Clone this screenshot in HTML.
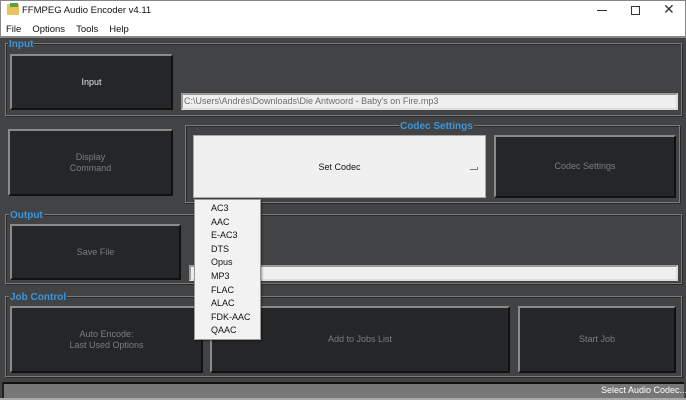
<!DOCTYPE html>
<html><head><meta charset="utf-8"><style>
*{margin:0;padding:0;box-sizing:border-box}
html,body{width:686px;height:400px;overflow:hidden}
body{background:#424345;font-family:"Liberation Sans",sans-serif;font-size:9px;position:relative;white-space:nowrap}
.a{position:absolute}
.title{left:0;top:0;width:686px;height:37px;background:#fff;border:1px solid #888;border-bottom:none}
.grp{border:1px solid #7a7a7a;box-shadow:inset 1px 1px 0 #2a2a2a, 1px 1px 0 #2a2a2a}
.lbl{color:#3a96dd;font-weight:bold;font-size:10px;background:#424345;padding:0 1px;line-height:11px}
.btn{background:#242628;border:2px solid #8a8a8a;border-right-color:#111;border-bottom-color:#111;color:#7d7d7d;display:flex;align-items:center;justify-content:center;text-align:center;line-height:11px}
.tb{background:#efefef;border:2px solid #9a9a9a;border-right-color:#ddd;border-bottom-color:#ddd;color:#6d6d6d;line-height:12px;padding-left:1px}
.menu span{margin-right:11px}
.dd{background:#f2f2f2;border:1px solid #999;box-shadow:1px 1px 2px rgba(0,0,0,.4)}
.dd div{height:13.6px;line-height:13.6px;padding-left:16px;color:#111}
</style></head><body>
<div class="a title"></div>
<div class="a" style="left:7px;top:4px;width:12px;height:11px;background:#e8c25a;border-radius:1px"></div>
<div class="a" style="left:10px;top:3px;width:8px;height:4px;background:#5aa04a"></div>
<div class="a" style="left:22px;top:5px;font-size:9.5px;color:#111">FFMPEG Audio Encoder v4.11</div>
<div class="a" style="left:597px;top:10px;width:10px;height:1px;background:#333"></div>
<div class="a" style="left:631px;top:6px;width:9px;height:9px;border:1px solid #333"></div>
<div class="a" style="left:663px;top:1px;font-size:14px;color:#333">✕</div>
<div class="a menu" style="left:6px;top:24px;font-size:9.5px;color:#111"><span>File</span><span>Options</span><span>Tools</span><span>Help</span></div>
<div class="a" style="left:0;top:36px;width:686px;height:2px;background:#8a8a8a"></div>

<div class="a grp" style="left:5px;top:43px;width:677px;height:73px"></div>
<div class="a lbl" style="left:8px;top:39px">Input</div>
<div class="a btn" style="left:10px;top:54px;width:163px;height:56px;color:#e8e8e8">Input</div>
<div class="a tb" style="left:181px;top:93px;width:497px;height:17px">C:\Users\Andrés\Downloads\Die Antwoord - Baby's on Fire.mp3</div>

<div class="a btn" style="left:8px;top:129px;width:165px;height:67px">Display<br>Command</div>
<div class="a grp" style="left:185px;top:125px;width:495px;height:78px"></div>
<div class="a lbl" style="left:399px;top:121px">Codec Settings</div>
<div class="a" style="left:193px;top:135px;width:293px;height:63px;background:#f0f0f0;border:1px solid #aaa;display:flex;align-items:center;justify-content:center;color:#111">Set Codec</div>
<div class="a" style="left:470px;top:167px;width:8px;height:3px;border-right:1px solid #777;border-bottom:1px solid #777"></div>
<div class="a btn" style="left:494px;top:135px;width:182px;height:63px">Codec Settings</div>

<div class="a grp" style="left:5px;top:214px;width:677px;height:70px"></div>
<div class="a lbl" style="left:9px;top:210px">Output</div>
<div class="a btn" style="left:10px;top:224px;width:171px;height:56px">Save File</div>
<div class="a tb" style="left:189px;top:265px;width:489px;height:16px"></div>

<div class="a grp" style="left:5px;top:296px;width:677px;height:81px"></div>
<div class="a lbl" style="left:9px;top:292px">Job Control</div>
<div class="a btn" style="left:10px;top:306px;width:193px;height:67px">Auto Encode:<br>Last Used Options</div>
<div class="a btn" style="left:210px;top:306px;width:300px;height:67px">Add to Jobs List</div>
<div class="a btn" style="left:518px;top:306px;width:158px;height:67px">Start Job</div>

<div class="a" style="left:2px;top:382px;width:682px;height:16px;background:#777;border-top:2px solid #111;border-left:2px solid #222"></div>
<div class="a" style="left:0;top:398px;width:686px;height:2px;background:#aaa"></div>
<div class="a" style="left:601px;top:385px;color:#fff;font-size:9px;line-height:11px">Select Audio Codec...</div>

<div class="a dd" style="left:194px;top:199px;width:67px;height:141px;padding-top:2px">
<div>AC3</div><div>AAC</div><div>E-AC3</div><div>DTS</div><div>Opus</div><div>MP3</div><div>FLAC</div><div>ALAC</div><div>FDK-AAC</div><div>QAAC</div>
</div>
</body></html>
